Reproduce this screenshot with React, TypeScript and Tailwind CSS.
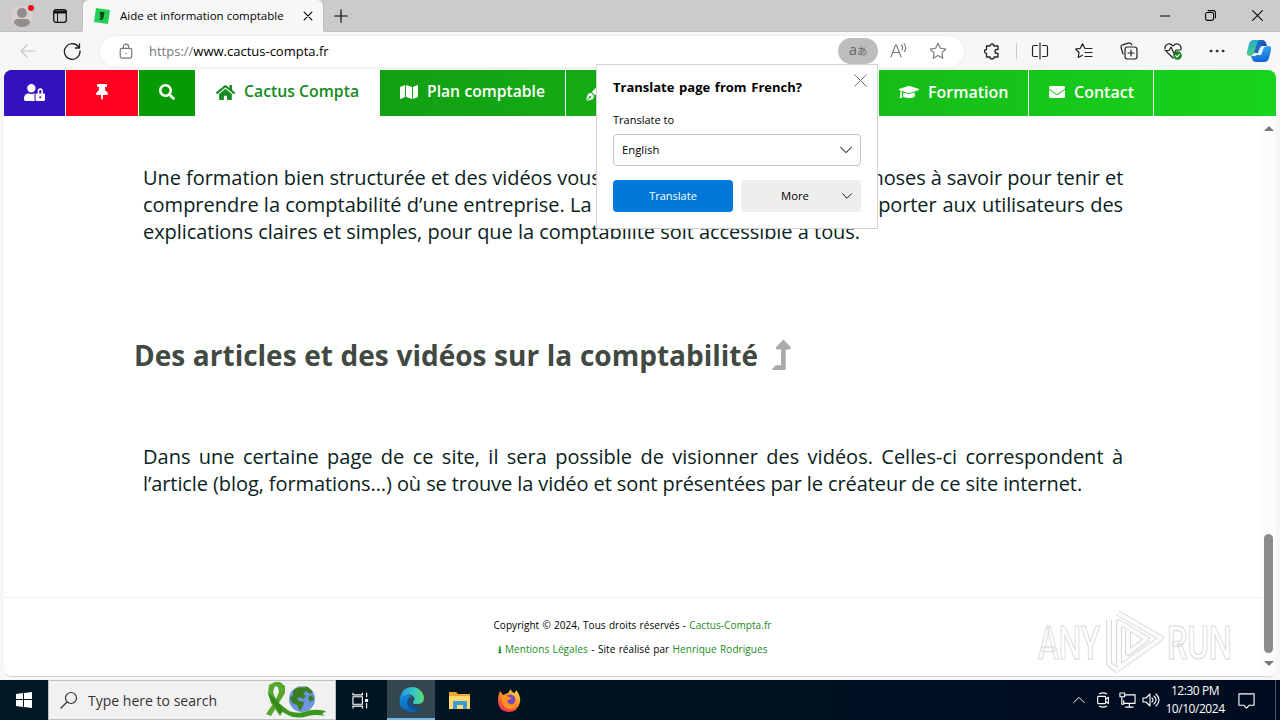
import type { ReactNode } from 'react';
import { FaEnvelope, FaGraduationCap, FaHome, FaLevelUpAlt, FaMap, FaPenFancy, FaSearch, FaThumbtack, FaUserLock } from 'react-icons/fa';

const Line = ({ size = 18, className = '', width = 1.1, children }: {
  size?: number;
  className?: string;
  width?: number;
  children: ReactNode;
}) => (
  <svg
    width={size}
    height={size}
    viewBox="0 0 18 18"
    fill="none"
    stroke="currentColor"
    strokeWidth={width}
    strokeLinecap="round"
    strokeLinejoin="round"
    className={`shrink-0 ${className}`}
  >
    {children}
  </svg>
);

const TitleBar = () => (
  <div className="flex h-8 bg-[#cbcbcb] text-black">
    <div className="flex w-[83px] items-center rounded-br-md border-b border-r border-[#bdbdbd]">
      <svg width="24" height="24" viewBox="0 0 24 24" className="ml-[11px] mt-px">
        <circle cx="11" cy="12" r="11" fill="#d5d0ce" />
        <circle cx="11" cy="9" r="5" fill="#918d8c" />
        <path d="M3 19q0-4 4-4h8q4 0 4 4-3 4-8 4t-8-4Z" fill="#918d8c" />
        <circle cx="20" cy="4" r="3" fill="#e80b14" />
      </svg>
      <svg width="14" height="14" viewBox="0 0 14 14" className="ml-[18px]" fill="none" stroke="#111">
        <rect x=".7" y=".7" width="12.6" height="12.6" rx="2.2" strokeWidth="1.3" />
        <path d="M1 3h12" strokeWidth="3" />
        <path d="M4.5 3v10" />
      </svg>
    </div>
    <div className="flex w-60 items-center rounded-t-md bg-[#f7f7f7]">
      <svg width="16" height="16" viewBox="0 0 16 16" className="ml-[11px]">
        <path d="m2 0 14 2-2 14-14-2Z" fill="#24cf55" />
        <path d="M5.5 4h5l-.5 4-1.5 4h-3l1-4Z" fill="#0b4a1e" />
      </svg>
      <span className="ml-[10px] w-[163px] whitespace-nowrap text-[11.5px] [text-align-last:justify]">
        Aide et information comptable
      </span>
      <Line size={10} className="ml-[20px]" width={2}>
        <path d="m2 2 14 14M16 2 2 16" />
      </Line>
    </div>
    <div className="flex flex-1 items-center rounded-bl-md border-b border-l border-[#bdbdbd]">
      <Line size={14} className="ml-[10px]" width={1.4}>
        <path d="M9 1v16M1 9h16" />
      </Line>
      <Line size={12} className="ml-auto" width={1.6}>
        <path d="M2 9h14" />
      </Line>
      <Line size={11} className="ml-[34px]" width={1.7}>
        <rect x="1" y="4" width="13" height="13" rx="3" />
        <path d="M5 1h9q3 0 3 3v9" />
      </Line>
      <Line size={11} className="ml-9 mr-[17px]" width={1.7}>
        <path d="m1 1 16 16M17 1 1 17" />
      </Line>
    </div>
  </div>
);

const AddressBar = () => (
  <div className="flex h-[38px] items-center bg-[#f7f7f7] text-[#222]">
    <Line className="ml-[19px] text-[#c6c6c6]">
      <path d="M16 9H2m6-6L2 9l6 6" />
    </Line>
    <Line className="ml-[26px]" width={1.3}>
      <path d="M16.2 6A7.8 7.8 0 1 0 17 9M16.5 1.8V6h-4.2" />
    </Line>
    <div className="ml-[19px] flex h-[31px] w-[864px] items-center rounded-2xl bg-white text-[#767676] shadow-[0_0_2px_#ddd]">
      <Line size={16} className="ml-[18px]" width={1.3}>
        <rect x="2.5" y="6" width="13" height="11" rx="2" />
        <path d="M6 6V4.2a3 3 0 0 1 6 0V6M9 11.4v.3" />
      </Line>
      <span className="ml-[15px] mt-px text-[13px]">
        https://<span className="text-black">www.cactus-compta.fr</span>
      </span>
      <div className="ml-auto flex h-[26px] w-10 items-center justify-center rounded-full bg-[#bdbdbd] text-[#686868]">
        <span className="-mt-[3px] text-[15px] leading-none">a</span>
        <span className="-mt-px font-['Noto_Sans_CJK_JP',sans-serif] text-[10px] leading-none">あ</span>
      </div>
      <Line className="ml-[12px]">
        <path d="m1 15 4.5-12h1L11 15M3 10.500h6.500M11.500 3q2 2 .5 5M14 1.500q3 4 .5 8" />
      </Line>
      <Line className="ml-[21px] mr-[17px]">
        <path d="m9 1.3 2.4 4.9 5.4.8-3.9 3.8.9 5.4L9 13.6l-4.8 2.6.9-5.4L1.2 7l5.4-.8Z" />
      </Line>
    </div>
    <Line className="ml-[19px]" width={1.3}>
      <path d="M3.500 4H7a2 2 0 0 1 4 0h4v3.500h-1a2 2 0 0 0 0 4h1V15h-4a2 2 0 0 1-4 0H3.500v-3.500a2 2 0 0 1 0-4Z" />
    </Line>
    <div className="ml-[15px] h-4 w-px bg-[#ccc]" />
    <Line className="ml-[14px]" width={1.2}>
      <path d="M6.500 3.500H3q-1.500 0-1.500 1.500v8q0 1.500 1.500 1.500h3.500M11.500 3.500H15q1.500 0 1.500 1.500v8q0 1.500-1.500 1.500h-3.500M9 1v16" />
    </Line>
    <Line className="ml-[26px]" width={1.2}>
      <path d="m11 6.500-1.200-.2L7.500 1.800 5.300 6.300l-4.700.7 3.500 3.500-.9 5 4.300-2.300M11 6.500h6M10 10.500h7M10 14.500h7" />
    </Line>
    <Line className="ml-[27px]" width={1.2}>
      <path d="M3 12 1.200 6q-.7-2.500 1.400-3.200L8.500 1.200q2.500-.6 3.200 1.600" />
      <rect x="5" y="5" width="12" height="12" rx="2.500" />
      <path d="M11 8v6M8 11h6" />
    </Line>
    <Line className="ml-[26px]" width={1.2}>
      <path d="M9 16 2.500 9.500M1 7Q.500 3 4 2q3-.5 5 2 2-2.500 5-2 3.500 1 3 5M1 8.500h4l2-3.500 3 6.500 2-3.500h5" />
      <circle cx="13.500" cy="13.500" r="3.700" fill="#168221" stroke="#168221" />
      <path d="m11.700 13.700 1.300 1.300 2.500-2.700" stroke="#fff" />
    </Line>
    <Line className="ml-[26px]" width={0.8}>
      <g fill="currentColor"><circle cx="3" cy="9" r="1" /><circle cx="9" cy="9" r="1" /><circle cx="15" cy="9" r="1" /></g>
    </Line>
    <svg width="24" height="24" viewBox="0 0 24 24" className="ml-[21px]">
      <defs>
        <linearGradient id="cp1" x2="1" y2=".4"><stop stopColor="#1b9be0" /><stop offset="1" stopColor="#1f3fae" /></linearGradient>
        <linearGradient id="cp2" x2=".3" y2="1"><stop stopColor="#1fa6e0" /><stop offset="1" stopColor="#4fd07c" /></linearGradient>
        <linearGradient id="cp3" x2=".3" y2="1"><stop stopColor="#39bdf3" /><stop offset="1" stopColor="#1360d8" /></linearGradient>
      </defs>
      <path d="M7 1h8q3 0 4 3l1 3h-4q-3 0-4 3l-1 4H4Z" fill="url(#cp1)" />
      <path d="M17 23H9q-3 0-4-3l-1-3h3q3 0 4-3l2-6h8Z" fill="url(#cp3)" />
      <path d="M7 1h6q-2 0-3 3L7 14q-1 3-4 3-4 0-3-4l2-8q1-4 5-4Z" fill="url(#cp2)" />
      <path d="M17 23h-6q2 0 3-3l3-10q1-3 4-3 4 0 3 4l-2 8q-1 4-5 4Z" fill="url(#cp3)" />
      <path d="M14 8h3l-3 8h-4Z" fill="#f7f7f7" />
    </svg>
  </div>
);

const SiteNav = () => (
  <nav className="flex h-[46px] shrink-0 bg-linear-to-r from-[#108a0f] to-[#18d41c] text-[16px] font-semibold text-white">
    <div className="flex w-[62px] items-center justify-center border-r border-white bg-[#3311bf]">
      <FaUserLock className="-mt-[2px] h-[17px] w-[21px]" />
    </div>
    <div className="flex w-[73px] items-center justify-center border-r border-white bg-[#ff0020]">
      <FaThumbtack className="-mt-[2px] h-4 w-4" />
    </div>
    <div className="flex w-14 items-center justify-center bg-[#059b05]">
      <FaSearch className="-mt-[2px] h-4 w-4" />
    </div>
    <div className="flex w-[185px] items-center bg-white pb-[2px] pl-[21px] text-[#158b20]">
      <FaHome className="h-[17px] w-[19px]" />
      <span className="ml-[9px] w-[114px] whitespace-nowrap text-[15.8px] [text-align-last:justify]">Cactus Compta</span>
    </div>
    <div className="flex w-[186px] items-center border-r border-white pb-[2px] pl-[20px]">
      <FaMap className="h-4 w-[18px]" />
      <span className="ml-[9px] w-[118px] whitespace-nowrap text-[15.7px] [text-align-last:justify]">Plan comptable</span>
    </div>
    <div className="flex w-[313px] items-center border-r border-white pl-[20px]">
      <FaPenFancy className="h-4 w-4" />
    </div>
    <div className="flex w-[150px] items-center border-r border-white pb-[2px] pl-[20px]">
      <FaGraduationCap className="h-5 w-5" />
      <span className="ml-[9px]">Formation</span>
    </div>
    <div className="flex w-[125px] items-center border-r border-white pb-[2px] pl-5">
      <FaEnvelope className="h-4 w-4" />
      <span className="ml-[9px]">Contact</span>
    </div>
  </nav>
);

const Chevron = ({ className }: { className: string }) => (
  <Line size={12} className={className} width={1.6}>
    <path d="m1 5 8 8 8-8" />
  </Line>
);

const TranslatePopup = () => (
  <div className="absolute left-[596px] top-[64px] h-[165px] w-[282px] border border-[#d2d2d2] bg-white px-4 text-[11.3px] text-black">
    <div className="flex h-[45px] items-center">
      <span className="w-[189px] whitespace-nowrap text-[13px] font-bold [text-align-last:justify]">
        Translate page from French?
      </span>
      <Line size={13} className="-mr-[6px] -mt-[15px] ml-auto text-[#666]" width={1.3}>
        <path d="m1 1 16 16M17 1 1 17" />
      </Line>
    </div>
    <div className="h-6 pt-[1px] text-[11px] leading-[18px]">Translate to</div>
    <div className="flex h-8 items-center rounded-sm border border-[#c4c4c4] px-2">
      English
      <Chevron className="ml-auto text-[#444]" />
    </div>
    <div className="mt-[14px] flex gap-2">
      <div className="flex h-8 w-[120px] items-center justify-center rounded-sm bg-[#0078d7] text-[11px] text-white">Translate</div>
      <div className="flex h-8 w-[120px] items-center rounded-sm bg-[#eee] pl-10 pr-2">
        More
        <Chevron className="ml-auto h-[10px] w-[12px]" />
      </div>
    </div>
  </div>
);

const Watermark = () => (
  <div className="absolute left-[1036px] top-[606px] opacity-75">
    <svg width="220" height="70" viewBox="0 0 220 70" fill="none">
      <g fontFamily="Roboto, sans-serif" fontSize="46" fontWeight="500" fill="#fff" stroke="#cfcfcf" strokeWidth="1.2">
        <text x="2" y="53" textLength="62" lengthAdjust="spacingAndGlyphs">ANY</text>
        <text x="131" y="53" textLength="65" lengthAdjust="spacingAndGlyphs">RUN</text>
      </g>
      <g strokeLinejoin="round">
        <path d="m82 7 43 25-42 30V16l28 17-19 14V25M73 14v44l9 7" stroke="#cdcdcd" strokeWidth="6" />
        <path d="m82 7 43 25-42 30V16l28 17-19 14V25M73 14v44l9 7" stroke="#fafafa" strokeWidth="4" />
      </g>
    </svg>
  </div>
);

const Page = () => (
  <div className="mx-1 flex h-[607px] flex-col overflow-hidden rounded-lg border-b border-[#d5d5d5] bg-white">
    <SiteNav />
    <div className="flex flex-1">
      <main className="flex w-[1257px] flex-col text-[#092220]">
        <div className="ml-[139px] mt-[48px] w-[980px] whitespace-nowrap text-[20px] leading-[27px]">
          <p className="flex justify-between">
            <span className="w-[454px] tracking-[-0.05px] [text-align-last:justify]">
              Une formation bien structurée et des vidéos vous
            </span>
            <span className="w-[261px] tracking-[-0.1px] [text-align-last:justify]">choses à savoir pour tenir et</span>
          </p>
          <p className="flex justify-between">
            <span className="w-[446px] [text-align-last:justify]">comprendre la comptabilité d’une entreprise. La</span>
            <span className="w-[268px] tracking-[-0.1px] [text-align-last:justify]">apporter aux utilisateurs des</span>
          </p>
          <p className="w-[717px] tracking-[-0.06px] [text-align-last:justify]">
            explications claires et simples, pour que la comptabilité soit accessible à tous.
          </p>
        </div>
        <div className="mt-[87px] flex h-[44px] items-center pl-[130px] text-[#414941]">
          <h2 className="mt-[2px] w-[624px] whitespace-nowrap text-[28px] font-bold [text-align-last:justify]">
            Des articles et des vidéos sur la comptabilité
          </h2>
          <FaLevelUpAlt className="ml-[14px] mt-px h-[30px] w-[19px] text-[#aaa]" />
        </div>
        <div className="ml-[139px] mt-[67px] w-[980px] whitespace-nowrap text-[20px] leading-[27px]">
          <p className="[text-align-last:justify]">
            Dans une certaine page de ce site, il sera possible de visionner des vidéos. Celles-ci correspondent à
          </p>
          <p className="w-[939px] tracking-[-0.09px] [text-align-last:justify]">
            l’article (blog, formations…) où se trouve la vidéo et sont présentées par le créateur de ce site internet.
          </p>
        </div>
        <footer className="mt-auto flex h-[79px] flex-col items-center border-t border-[#eee] pt-[15px] text-[10px] leading-6 text-black">
          <p className="w-[278px] whitespace-nowrap tracking-[0.06px] [text-align-last:justify]">
            Copyright © 2024, Tous droits réservés - <span className="text-[#198a20]">Cactus-Compta.fr</span>
          </p>
          <p className="w-[270px] whitespace-nowrap tracking-[0.06px] [text-align-last:justify]">
            <b className="text-[#198a20]">⭳</b> <span className="text-[#198a20]">Mentions Légales</span> - Site réalisé par{' '}
            <span className="text-[#198a20]">Henrique Rodrigues</span>
          </p>
        </footer>
      </main>
      <div className="flex w-[15px] flex-col items-center bg-[#fcfcfc] pb-[10px] pt-[10px]">
        <div className="border-x-[5px] border-b-[5px] border-x-transparent border-b-[#777]" />
        <div className="mt-auto h-[119px] w-[9px] rounded-full bg-[#8b8b8b]" />
        <div className="mt-[8px] border-x-[5px] border-t-[5px] border-x-transparent border-t-[#777]" />
      </div>
    </div>
  </div>
);

const Ribbon = () => (
  <svg width="62" height="36" viewBox="0 0 62 36">
    <circle cx="37" cy="17" r="13" fill="#6c97e0" />
    <path d="M28 8q4-4 9-4l6 1 5 5-3 2-4-3-3 3 3 2-3 3-3-2-3 2 2 2 5 1-1 4-3 5-3-6-5-2-2-5 3-3Zm15 7 4-2 2 5-4 2Z" fill="#3c7d22" />
    <path d="M27 9q5-6 13-4" stroke="#bcd3f4" fill="none" />
    <path d="m4 3 6-3h5l5 4v7l-6 10L6 34l-5-2 9-13 4-9-1-5-3-1-2 6 3 8 8 10-4 6-9-13L3 11Z" fill="#58a82b" />
    <path d="m15 22 9 7q8 3 15 1 9-4 22-1l-4 3 3 2q-8-2-17 0-12 4-22-2l-9-6Z" fill="#3d961e" />
    <path d="m3 11 3 8 9 13 3-6-8-10Z" fill="#368a1b" />
  </svg>
);

const EdgeLogo = () => (
  <svg width="25" height="25" viewBox="0 0 25 25">
    <defs>
      <linearGradient id="edgeTop"><stop stopColor="#2393d8" /><stop offset=".6" stopColor="#36c8c6" /><stop offset="1" stopColor="#64dc65" /></linearGradient>
      <linearGradient id="edgeBase" x2=".5" y2="1"><stop stopColor="#168ee0" /><stop offset="1" stopColor="#0b62b8" /></linearGradient>
    </defs>
    <path d="M1 11Q3 0 13 0c7 0 12 6 12 11q0 6-7 6-5 0-4-2 3-3 0-6-4-4-13 2Z" fill="url(#edgeTop)" />
    <path d="M1 11q7-6 12-1-6 1-4 8 2 5 11 5-7 4-14 0Q-1 20 1 11Z" fill="url(#edgeBase)" />
    <path d="M10 11q-5 8 5 12 6 1 9-4-6 3-10-1-4-3-4-7Z" fill="#124f8d" />
  </svg>
);

const Firefox = () => (
  <svg width="24" height="25" viewBox="0 0 24 25">
    <defs>
      <linearGradient id="fox" x1=".8" x2=".2" y2="1"><stop stopColor="#ffe145" /><stop offset=".45" stopColor="#ff8c20" /><stop offset="1" stopColor="#e82360" /></linearGradient>
    </defs>
    <path d="m3 3 3 4 5-2 3-4q0 3 4 4l1-3q5 6 4 12-2 10-12 10Q1 23 1 13q0-6 2-10Z" fill="url(#fox)" />
    <circle cx="13" cy="12" r="5.500" fill="#7649c7" />
    <path d="M5 8q4-2 7 1l3 1-5 3q1 4 6 3 3-2 2-5 4 9-5 10-9 0-8-13Z" fill="#ff9320" />
  </svg>
);

const Taskbar = () => (
  <div className="flex h-10 bg-linear-to-r from-[#001923] to-[#000b20] text-white">
    <div className="flex w-12 items-center justify-center">
      <svg width="16" height="16" viewBox="0 0 16 16" fill="#fff">
        <path d="m0 2 7-1v6H0Zm8-1 8-1v7H8ZM0 8h7v7l-7-1Zm8 0h8v8l-8-1Z" />
      </svg>
    </div>
    <div className="flex w-72 items-center border border-[#bfc1c1] bg-[#f1f1f1] pl-[11px] text-[#333]">
      <Line width={1.2}><circle cx="11" cy="7" r="5.500" /><path d="m7 11-6 6" /></Line>
      <span className="ml-[10px] w-[129px] whitespace-nowrap text-[14px] [text-align-last:justify]">Type here to search</span>
      <span className="ml-auto mr-[8px]"><Ribbon /></span>
    </div>
    <div className="flex w-[51px] items-center justify-center">
      <Line size={17} className="-ml-[3px]" width={1.2}>
        <path d="M1 1v2h10V1M1 17v-2h10v2M1 5h10v8H1ZM15.500 1v4m0 7v5" /><path d="M14.500 8h2v2h-2Z" fill="#fff" />
      </Line>
    </div>
    <div className="flex w-12 items-center justify-center border-b-2 border-[#76b5e6] bg-[#34474e]"><EdgeLogo /></div>
    <div className="flex w-[49px] items-center justify-center">
      <svg width="21" height="19" viewBox="0 0 21 19">
        <path d="M0 1h7l2 2h12v15H0Z" fill="#e8a82c" /><path d="M0 5h21v13H0Z" fill="#ffd96d" />
        <path d="M4 18v-7q0-1 1-1h12q1 0 1 1v7h-4v-4H8v4Z" fill="#3a9bd7" />
      </svg>
    </div>
    <div className="flex w-[49px] items-center justify-center"><Firefox /></div>
    <div className="ml-auto flex items-center">
      <Line size={12} width={1.5}><path d="m1 13 8-8 8 8" /></Line>
      <Line size={16} className="ml-[10px]" width={1.3}><rect x="3" y="5" width="9" height="8" rx="1" /><path d="m12 8 3-2v7l-3-2M5 2q4-2 8 0M5 16q4 2 8 0" /></Line>
      <Line size={17} className="ml-2" width={1.2}><path d="M6 3h11v9H5V9M1 1h5v4H1Zm2 4v8h2M11 12v4M7 16h8" /></Line>
      <Line size={18} className="ml-[6px]" width={1.1}><path d="M1 7h3l4-4v12l-4-4H1ZM10 7q2 2 0 4M12 5q4 4 0 8M14 3q6 6 0 12" /></Line>
      <div className="ml-[5px] w-[60px] whitespace-nowrap text-center text-[12px] leading-[18px] tracking-[-0.45px]">12:30 PM<br />10/10/2024</div>
      <Line size={17} className="ml-[13px] mr-[20px]" width={1.2}><path d="M1 2h16v12h-5l-3 3-3-3H1Z" /></Line>
      <div className="mr-1 h-10 w-px bg-[#465265]" />
    </div>
  </div>
);

export default function App() {
  return (
    <div className="relative flex h-[720px] w-[1280px] flex-col overflow-hidden bg-[#f4f6f8] font-['Open_Sans','Noto_Sans',sans-serif]">
      <TitleBar />
      <AddressBar />
      <Page />
      <div className="h-[3px] shrink-0" />
      <Taskbar />
      <TranslatePopup />
      <Watermark />
    </div>
  );
}
